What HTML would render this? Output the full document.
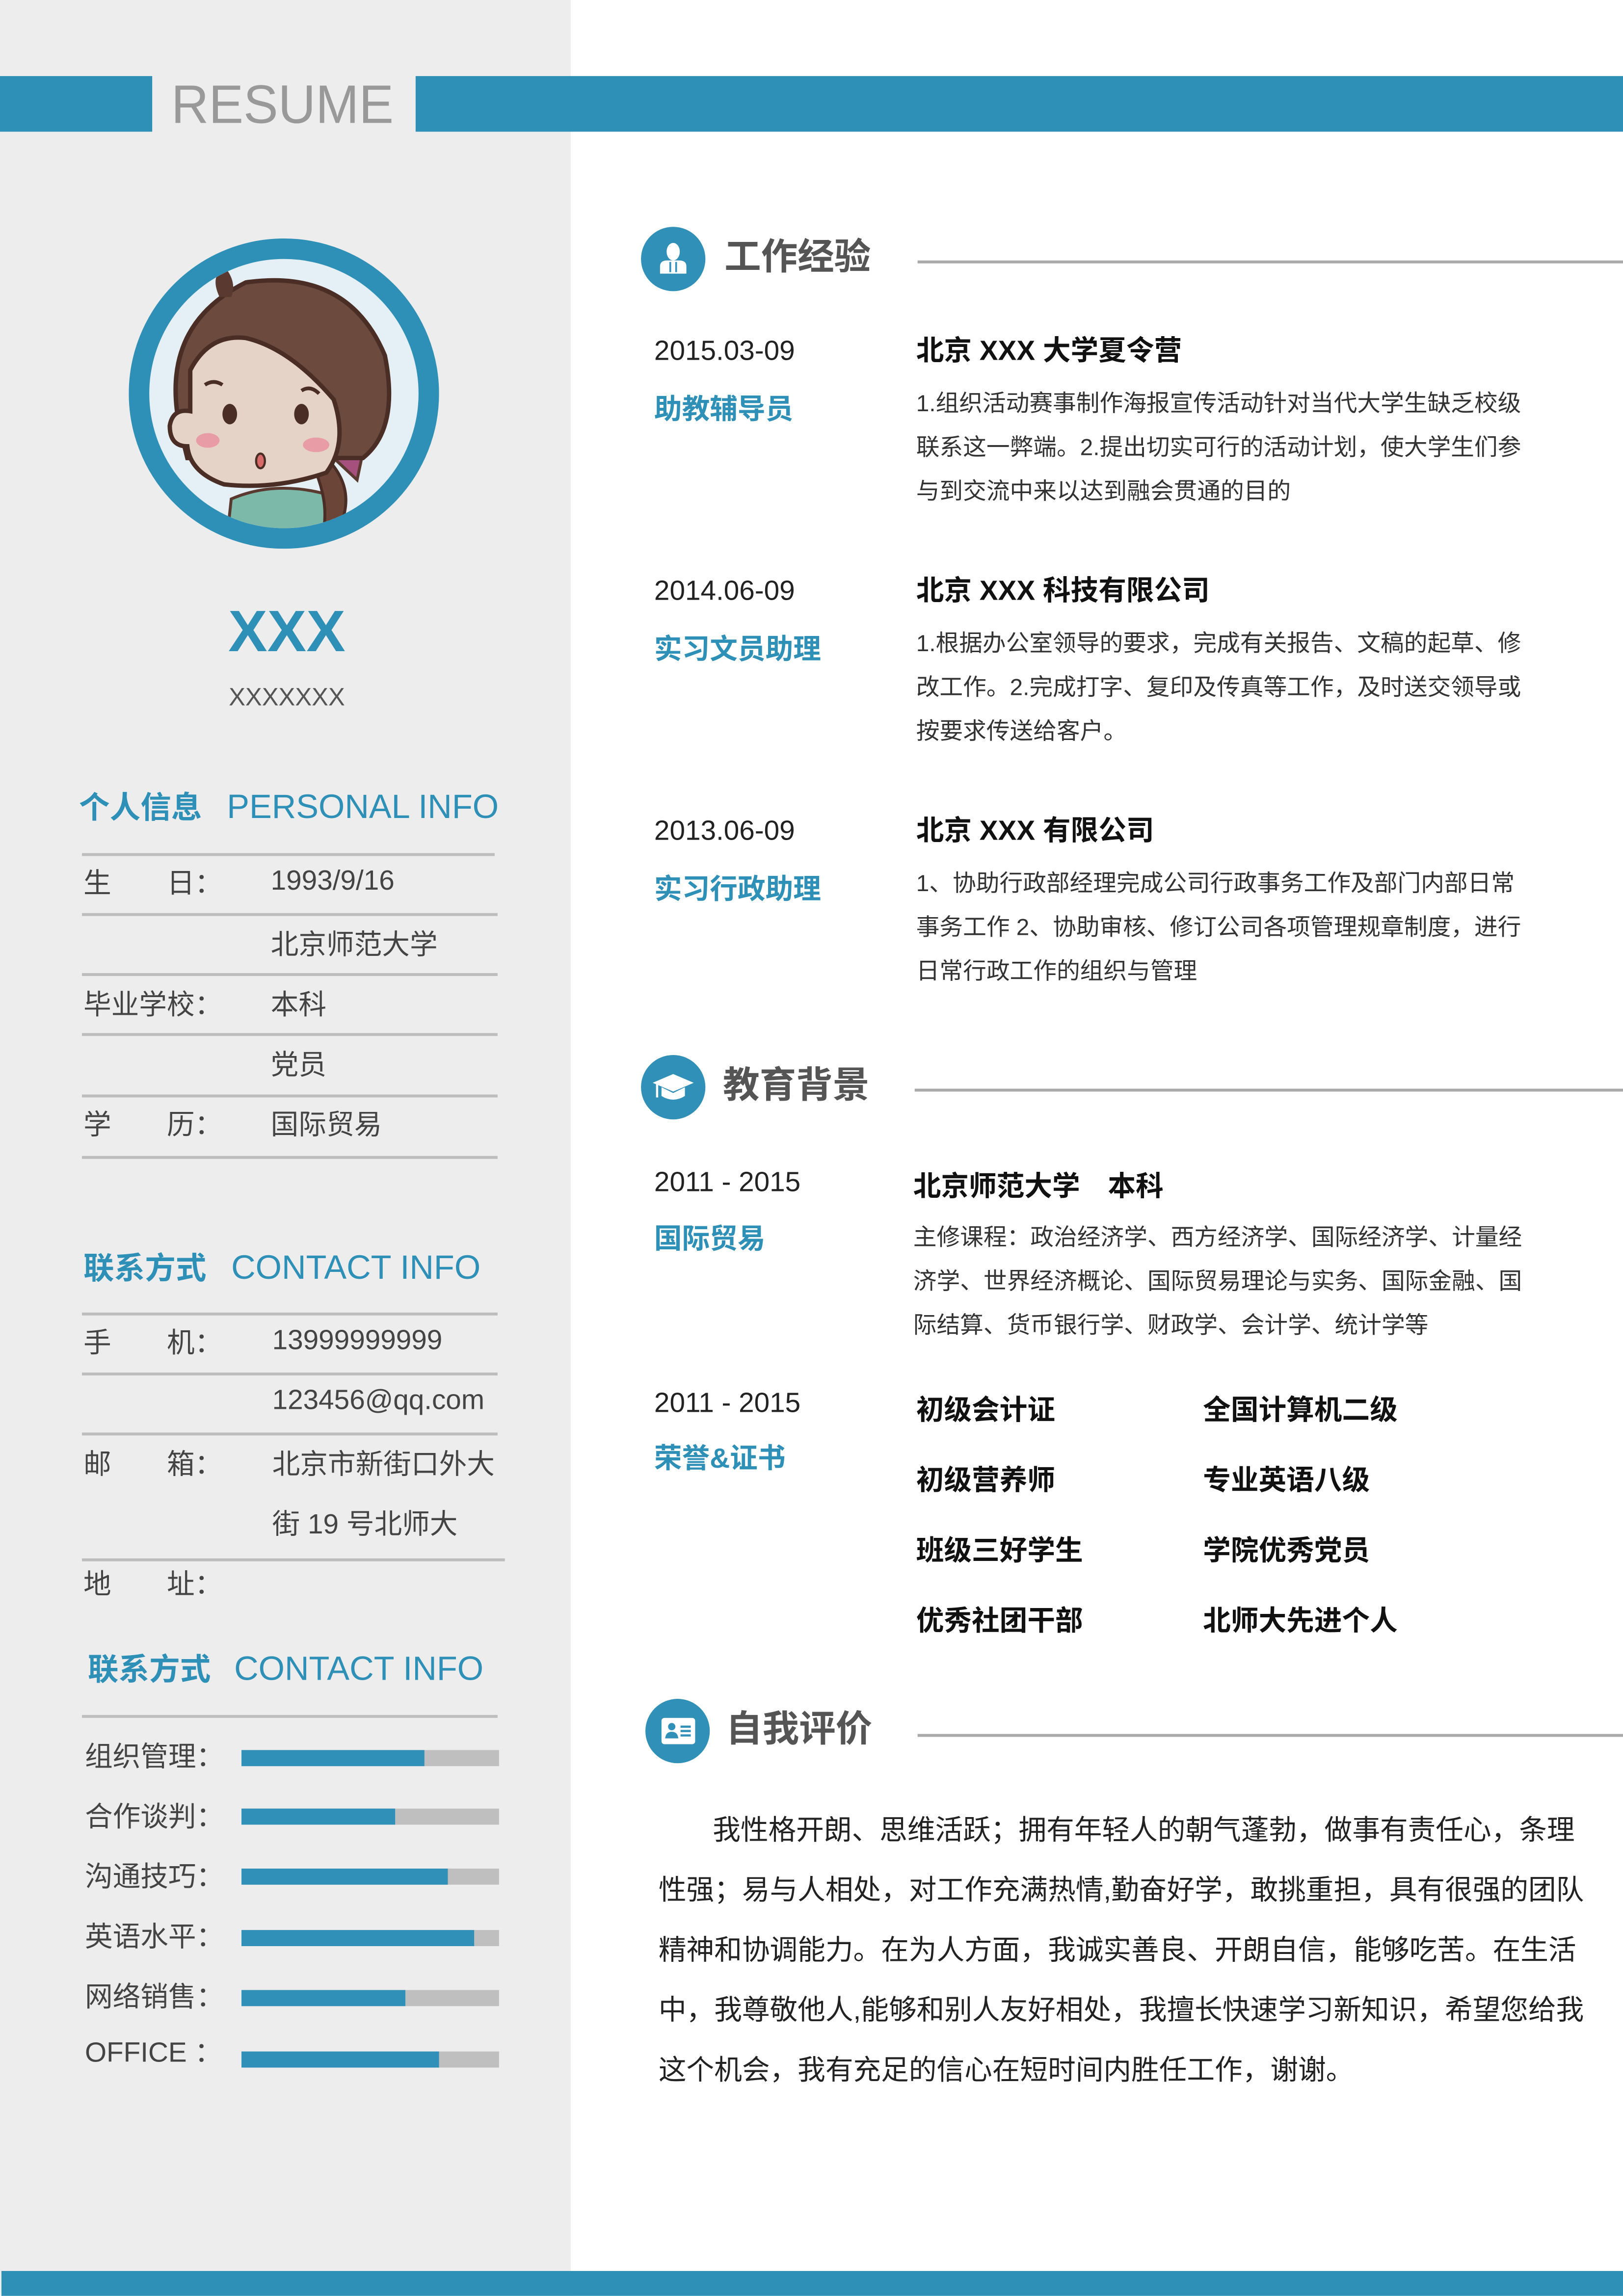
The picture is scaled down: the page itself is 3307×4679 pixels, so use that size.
<!DOCTYPE html>
<html><head><meta charset="utf-8">
<style>
html,body{margin:0;padding:0;width:3307px;height:4677px;overflow:hidden;background:#fff}
#w{position:absolute;left:0;top:0;width:1109px;height:1569px;transform:scale(2.98196);transform-origin:0 0;font-family:"Liberation Sans","Noto Sans CJK SC",sans-serif;}
.t{position:absolute;white-space:nowrap;line-height:30px;height:30px}
.ln{position:absolute;height:1.5px;background:#bdbdbd}
.lbl{font-size:19px;color:#444}
.hb{font-weight:bold;color:#2e8fb7;font-size:21px}
.he{color:#2e8fb7;font-size:23px}
.bar{position:absolute;left:165px;width:176px;height:11px;background:#bfbfbf}
.bar i{display:block;height:100%;background:#3190b8}
.ic{position:absolute;width:44px;height:44px;border-radius:50%;background:#3190b8}
.ht{font-size:25px;font-weight:bold;color:#555}
.rl{position:absolute;height:1.5px;background:#aaa;right:0}
.dt{font-size:19px;color:#222}
.role{font-size:19px;font-weight:bold;color:#2e8fb7}
.co{font-size:19px;font-weight:bold;color:#111}
.ds{font-size:16px;color:#333}
.p{position:absolute;left:450px;font-size:19px;line-height:30px;height:30px;color:#222;white-space:nowrap}
</style></head><body><div id="w">
<div style="position:absolute;left:0;top:0;width:390px;height:1569px;background:#eeeded"></div>
<div style="position:absolute;left:0;top:52px;width:104px;height:38px;background:#2e8fb7"></div>
<div style="position:absolute;left:284px;top:52px;width:825px;height:38px;background:#2e8fb7"></div>
<div class="t" style="left:117px;top:49px;font-size:37px;line-height:46px;height:46px;color:#999;transform:scaleX(0.96);transform-origin:0 0">RESUME</div>
<div style="position:absolute;left:1px;top:1552px;width:1108px;height:17px;background:#2e8fb7"></div>

<svg style="position:absolute;left:88px;top:163px" width="212" height="212" viewBox="0 0 212 212">
<defs><clipPath id="c"><circle cx="106" cy="106" r="92"/></clipPath></defs>
<circle cx="106" cy="106" r="99" fill="#e4f0f5" stroke="#2e8fb7" stroke-width="14"/>
<g clip-path="url(#c)">
<path d="M70 178 L66 215 L140 215 L136 175 Q100 165 70 178Z" fill="#7db9a8" stroke="#5a3a30" stroke-width="2"/>
<path d="M135 150 Q155 170 145 195 Q150 210 140 215 L128 215 Q140 190 128 160Z" fill="#6b4638" stroke="#4a2e25" stroke-width="2"/>
<path d="M140 150 L160 146 L156 165Z" fill="#a6507e" stroke="#5a3a30" stroke-width="2"/>
<path d="M35 130 Q20 60 80 30 Q150 20 175 80 Q185 130 160 150 L40 150Z" fill="#6d4a3e" stroke="#4a2e25" stroke-width="3"/>
<path d="M62 40 Q55 25 66 20 Q74 30 70 40Z" fill="#5a3a30"/>
<path d="M42 90 Q55 65 80 68 Q110 75 140 110 Q150 140 135 160 Q100 172 65 168 Q42 160 40 142 Q28 142 28 128 Q30 116 42 118Z" fill="#e6d3c8" stroke="#4a2e25" stroke-width="3"/>
<path d="M52 100 Q58 96 64 100 M118 104 Q124 100 130 106" stroke="#4a2e25" stroke-width="2.5" fill="none"/>
<ellipse cx="69" cy="120" rx="5" ry="7" fill="#4a2e25"/>
<ellipse cx="118" cy="120" rx="5" ry="7" fill="#4a2e25"/>
<ellipse cx="54" cy="138" rx="8" ry="5" fill="#e89ca6"/>
<ellipse cx="128" cy="141" rx="9" ry="5" fill="#e89ca6"/>
<ellipse cx="90" cy="152" rx="3" ry="5" fill="#d86a6a" stroke="#4a2e25" stroke-width="1.5"/>
</g></svg>

<div class="t" style="left:0;width:392px;text-align:center;top:410px;font-size:40px;line-height:44px;height:44px;font-weight:bold;color:#2e8fb7">XXX</div>
<div class="t" style="left:0;width:392px;text-align:center;top:462px;font-size:17px;color:#555">XXXXXXX</div>

<div class="t hb" style="left:54px;top:538px">个人信息</div>
<div class="t he" style="left:155px;top:536px">PERSONAL INFO</div>
<div class="ln" style="left:56px;top:583px;width:282px"></div>
<div class="t lbl" style="left:57px;top:590px">生　　日：</div><div class="t lbl" style="left:185px;top:588px">1993/9/16</div>
<div class="ln" style="left:56px;top:624px;width:284px"></div>
<div class="t lbl" style="left:185px;top:632px">北京师范大学</div>
<div class="ln" style="left:56px;top:665px;width:284px"></div>
<div class="t lbl" style="left:57px;top:673px">毕业学校：</div><div class="t lbl" style="left:185px;top:673px">本科</div>
<div class="ln" style="left:56px;top:706px;width:284px"></div>
<div class="t lbl" style="left:185px;top:714px">党员</div>
<div class="ln" style="left:56px;top:748px;width:284px"></div>
<div class="t lbl" style="left:57px;top:755px">学　　历：</div><div class="t lbl" style="left:185px;top:755px">国际贸易</div>
<div class="ln" style="left:56px;top:790px;width:284px"></div>

<div class="t hb" style="left:57px;top:853px">联系方式</div>
<div class="t he" style="left:158px;top:851px">CONTACT INFO</div>
<div class="ln" style="left:56px;top:897px;width:284px"></div>
<div class="t lbl" style="left:57px;top:904px">手　　机：</div><div class="t lbl" style="left:186px;top:902px">13999999999</div>
<div class="ln" style="left:56px;top:938px;width:284px"></div>
<div class="t lbl" style="left:186px;top:943px">123456@qq.com</div>
<div class="ln" style="left:56px;top:979px;width:284px"></div>
<div class="t lbl" style="left:57px;top:987px">邮　　箱：</div><div class="t lbl" style="left:186px;top:987px">北京市新街口外大</div>
<div class="t lbl" style="left:186px;top:1028px">街 19 号北师大</div>
<div class="ln" style="left:56px;top:1065px;width:289px"></div>
<div class="t lbl" style="left:57px;top:1069px">地　　址：</div>

<div class="t hb" style="left:60px;top:1127px">联系方式</div>
<div class="t he" style="left:160px;top:1125px">CONTACT INFO</div>
<div class="ln" style="left:56px;top:1172px;width:284px"></div>
<div class="t lbl" style="left:58px;top:1187px">组织管理：</div><div class="bar" style="top:1196px"><i style="width:125px"></i></div>
<div class="t lbl" style="left:58px;top:1228px">合作谈判：</div><div class="bar" style="top:1236px"><i style="width:105px"></i></div>
<div class="t lbl" style="left:58px;top:1269px">沟通技巧：</div><div class="bar" style="top:1277px"><i style="width:141px"></i></div>
<div class="t lbl" style="left:58px;top:1310px">英语水平：</div><div class="bar" style="top:1319px"><i style="width:159px"></i></div>
<div class="t lbl" style="left:58px;top:1351px">网络销售：</div><div class="bar" style="top:1360px"><i style="width:112px"></i></div>
<div class="t lbl" style="left:58px;top:1389px">OFFICE ：</div><div class="bar" style="top:1402px"><i style="width:135px"></i></div>

<div class="ic" style="left:438px;top:155px"><svg width="44" height="44" viewBox="0 0 44 44"><ellipse cx="22" cy="17" rx="4.5" ry="6" fill="#fff"/><path d="M13 32 L13 27 Q13 23 18 23 L26 23 Q31 23 31 27 L31 32Z" fill="#fff"/><path d="M20 24 L20 31 M24 24 L24 31" stroke="#3190b8" stroke-width="1.2"/></svg></div>
<div class="t ht" style="left:495px;top:161px">工作经验</div>
<div class="rl" style="left:627px;top:178px"></div>

<div class="t dt" style="left:447px;top:226px">2015.03-09</div>
<div class="t role" style="left:447px;top:266px">助教辅导员</div>
<div class="t co" style="left:626px;top:226px">北京 XXX 大学夏令营</div>
<div class="t ds" style="left:626px;top:262px">1.组织活动赛事制作海报宣传活动针对当代大学生缺乏校级</div>
<div class="t ds" style="left:626px;top:292px">联系这一弊端。2.提出切实可行的活动计划，使大学生们参</div>
<div class="t ds" style="left:626px;top:322px">与到交流中来以达到融会贯通的目的</div>

<div class="t dt" style="left:447px;top:390px">2014.06-09</div>
<div class="t role" style="left:447px;top:430px">实习文员助理</div>
<div class="t co" style="left:626px;top:390px">北京 XXX 科技有限公司</div>
<div class="t ds" style="left:626px;top:426px">1.根据办公室领导的要求，完成有关报告、文稿的起草、修</div>
<div class="t ds" style="left:626px;top:456px">改工作。2.完成打字、复印及传真等工作，及时送交领导或</div>
<div class="t ds" style="left:626px;top:486px">按要求传送给客户。</div>

<div class="t dt" style="left:447px;top:554px">2013.06-09</div>
<div class="t role" style="left:447px;top:594px">实习行政助理</div>
<div class="t co" style="left:626px;top:554px">北京 XXX 有限公司</div>
<div class="t ds" style="left:626px;top:590px">1、协助行政部经理完成公司行政事务工作及部门内部日常</div>
<div class="t ds" style="left:626px;top:620px">事务工作 2、协助审核、修订公司各项管理规章制度，进行</div>
<div class="t ds" style="left:626px;top:650px">日常行政工作的组织与管理</div>

<div class="ic" style="left:438px;top:721px"><svg width="44" height="44" viewBox="0 0 44 44"><path d="M8 19 L22 13 L36 19 L22 25Z" fill="#fff"/><path d="M14 22 L14 28 Q22 33 30 28 L30 22 L22 26Z" fill="#fff"/><path d="M11 20 L11 29" stroke="#fff" stroke-width="1.5"/></svg></div>
<div class="t ht" style="left:494px;top:727px">教育背景</div>
<div class="rl" style="left:625px;top:744px"></div>

<div class="t dt" style="left:447px;top:794px">2011 - 2015</div>
<div class="t role" style="left:447px;top:833px">国际贸易</div>
<div class="t co" style="left:624px;top:797px">北京师范大学　本科</div>
<div class="t ds" style="left:624px;top:832px">主修课程：政治经济学、西方经济学、国际经济学、计量经</div>
<div class="t ds" style="left:624px;top:862px">济学、世界经济概论、国际贸易理论与实务、国际金融、国</div>
<div class="t ds" style="left:624px;top:892px">际结算、货币银行学、财政学、会计学、统计学等</div>

<div class="t dt" style="left:447px;top:945px">2011 - 2015</div>
<div class="t role" style="left:447px;top:983px">荣誉&amp;证书</div>
<div class="t co" style="left:626px;top:950px">初级会计证</div><div class="t co" style="left:822px;top:950px">全国计算机二级</div>
<div class="t co" style="left:626px;top:998px">初级营养师</div><div class="t co" style="left:822px;top:998px">专业英语八级</div>
<div class="t co" style="left:626px;top:1046px">班级三好学生</div><div class="t co" style="left:822px;top:1046px">学院优秀党员</div>
<div class="t co" style="left:626px;top:1094px">优秀社团干部</div><div class="t co" style="left:822px;top:1094px">北师大先进个人</div>

<div class="ic" style="left:441px;top:1161px"><svg width="44" height="44" viewBox="0 0 44 44"><rect x="11" y="13" width="23" height="18" rx="2" fill="#fff"/><circle cx="18" cy="19" r="2.5" fill="#3190b8"/><path d="M13.5 27 Q14 22.5 18 22.5 Q22 22.5 22.5 27Z" fill="#3190b8"/><path d="M24 19 H31 M24 22 H31 M24 25 H31" stroke="#3190b8" stroke-width="1.5"/></svg></div>
<div class="t ht" style="left:496px;top:1167px">自我评价</div>
<div class="rl" style="left:627px;top:1185px"></div>

<div class="p" style="left:487px;top:1237px">我性格开朗、思维活跃；拥有年轻人的朝气蓬勃，做事有责任心，条理</div>
<div class="p" style="top:1278px">性强；易与人相处，对工作充满热情,勤奋好学，敢挑重担，具有很强的团队</div>
<div class="p" style="top:1319px">精神和协调能力。在为人方面，我诚实善良、开朗自信，能够吃苦。在生活</div>
<div class="p" style="top:1360px">中，我尊敬他人,能够和别人友好相处，我擅长快速学习新知识，希望您给我</div>
<div class="p" style="top:1401px">这个机会，我有充足的信心在短时间内胜任工作，谢谢。</div>
</div></body></html>
